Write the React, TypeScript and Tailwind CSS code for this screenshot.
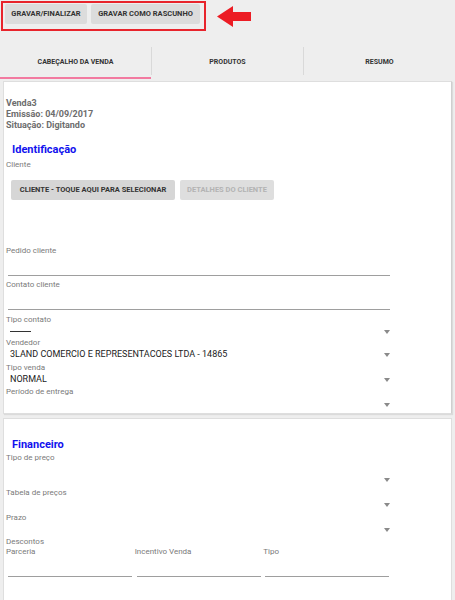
import React from 'react'

const font = { fontFamily: 'Roboto, "Noto Sans", sans-serif' }

function Caret() {
  return (
    <svg width="6" height="4" viewBox="0 0 6 4" className="shrink-0">
      <path d="M0 0 L6 0 L3 4 Z" fill="#8a8a8a" />
    </svg>
  )
}

function Label({ children, className = '' }: { children: React.ReactNode; className?: string }) {
  return <div className={`h-[10px] text-[8px] leading-[10px] text-[#7a7a7a] ${className}`}>{children}</div>
}

function TextField({ label, mt }: { label: string; mt: string }) {
  return (
    <div className={mt}>
      <Label>{label}</Label>
      <div className="ml-[2px] h-[20px] w-[382px] border-b border-[#9e9e9e]" />
    </div>
  )
}

function Select({ value, h = 'h-[13px]', align = 'items-center' }: { value?: React.ReactNode; h?: string; align?: string }) {
  return (
    <div className={`flex ${h} w-[384px] ${align} justify-between pl-[4px]`}>
      <span className="text-[9px] leading-[13px] text-[#222]">{value}</span>
      <Caret />
    </div>
  )
}

export default function App() {
  return (
    <div className="h-[600px] w-[455px] overflow-hidden bg-[#eeeeee]" style={font}>
      {/* toolbar */}
      <div className="flex items-start">
        <div className="ml-[1px] mt-[1px] flex h-[30px] w-[205px] gap-[4px] border-2 border-[#e8242c] pl-[2px] pt-[1px]">
          <button className="h-[20px] w-[82px] rounded-[2px] bg-[#dcdcdc] text-[7.5px] font-bold text-[#333]">GRAVAR/FINALIZAR</button>
          <button className="h-[20px] w-[109px] rounded-[2px] bg-[#dcdcdc] text-[7.5px] font-bold text-[#333]">GRAVAR COMO RASCUNHO</button>
        </div>
        <svg width="35" height="21" viewBox="0 0 35 21" className="ml-[11px] mt-[6px]">
          <path d="M0 10.5 L16 0 L16 6 L34 6 L34 15 L16 15 L16 21 Z" fill="#ec1c24" />
        </svg>
      </div>

      {/* tabs */}
      <div className="mt-[16px] flex h-[32px]">
        <div className="flex w-[151px] items-center justify-center border-b-[2px] border-[#f27aa0] text-[7px] font-bold text-[#333]">CABEÇALHO DA VENDA</div>
        <div className="mb-[4px] flex w-[152px] items-center justify-center border-l border-[#d9d9d9] pt-[2px] text-[7px] font-bold text-[#333]">PRODUTOS</div>
        <div className="mb-[4px] flex w-[152px] items-center justify-center border-l border-[#d9d9d9] pt-[2px] text-[7px] font-bold text-[#333]">RESUMO</div>
      </div>

      {/* card 1 */}
      <div className="ml-[3px] mt-[2px] h-[333px] w-[449px] border border-[#dedede] border-r-[#cfcfcf] bg-white px-[2px] pt-[16px] shadow-[1px_1px_1px_rgba(0,0,0,0.08)]">
        <div className="text-[9px] font-bold leading-[11px] text-[#6d6d6d]">
          <div>Venda3</div>
          <div>Emissão: 04/09/2017</div>
          <div>Situação: Digitando</div>
        </div>
        <div className="ml-[6px] mt-[12px] text-[11px] font-bold leading-[14px] text-[#1212ee]">Identificação</div>
        <Label className="mt-[3px]">Cliente</Label>
        <div className="ml-[5px] mt-[10px] flex gap-[5px]">
          <button className="h-[20px] w-[164px] rounded-[2px] bg-[#d6d6d6] text-[7.5px] font-bold text-[#333]">CLIENTE - TOQUE AQUI PARA SELECIONAR</button>
          <button className="h-[20px] w-[94px] rounded-[2px] bg-[#dedede] text-[7.5px] font-bold text-[#b3b3b3]">DETALHES DO CLIENTE</button>
        </div>
        <TextField label="Pedido cliente" mt="mt-[46px]" />
        <TextField label="Contato cliente" mt="mt-[4px]" />
        <Label className="mt-[5px]">Tipo contato</Label>
        <Select value={<span className="block h-px w-[21px] bg-[#333]" />} />
        <Label>Vendedor</Label>
        <Select value="3LAND COMERCIO E REPRESENTACOES LTDA - 14865" />
        <Label className="mt-[2px]">Tipo venda</Label>
        <Select value="NORMAL" />
        <Label className="mt-[1px]">Período de entrega</Label>
        <Select align="items-end pb-[3px]" />
      </div>

      {/* card 2 */}
      <div className="ml-[3px] mt-[4px] h-[200px] w-[449px] border border-[#dedede] bg-white px-[2px] pt-[19px]">
        <div className="ml-[6px] text-[11px] font-bold leading-[14px] text-[#1212ee]">Financeiro</div>
        <Label className="mt-[1px]">Tipo de preço</Label>
        <Select h="h-[24px]" align="items-end pb-[5px]" />
        <Label className="mt-[1px]">Tabela de preços</Label>
        <Select />
        <Label className="mt-[2px]">Prazo</Label>
        <Select />
        <Label className="mt-[1px]">Descontos</Label>
        <div className="grid w-[386px] grid-cols-3">
          {['Parceria', 'Incentivo Venda', 'Tipo'].map((l) => (
            <div key={l}>
              <Label>{l}</Label>
              <div className="ml-[2px] h-[20px] w-[124px] border-b border-[#9e9e9e]" />
            </div>
          ))}
        </div>
      </div>
    </div>
  )
}
